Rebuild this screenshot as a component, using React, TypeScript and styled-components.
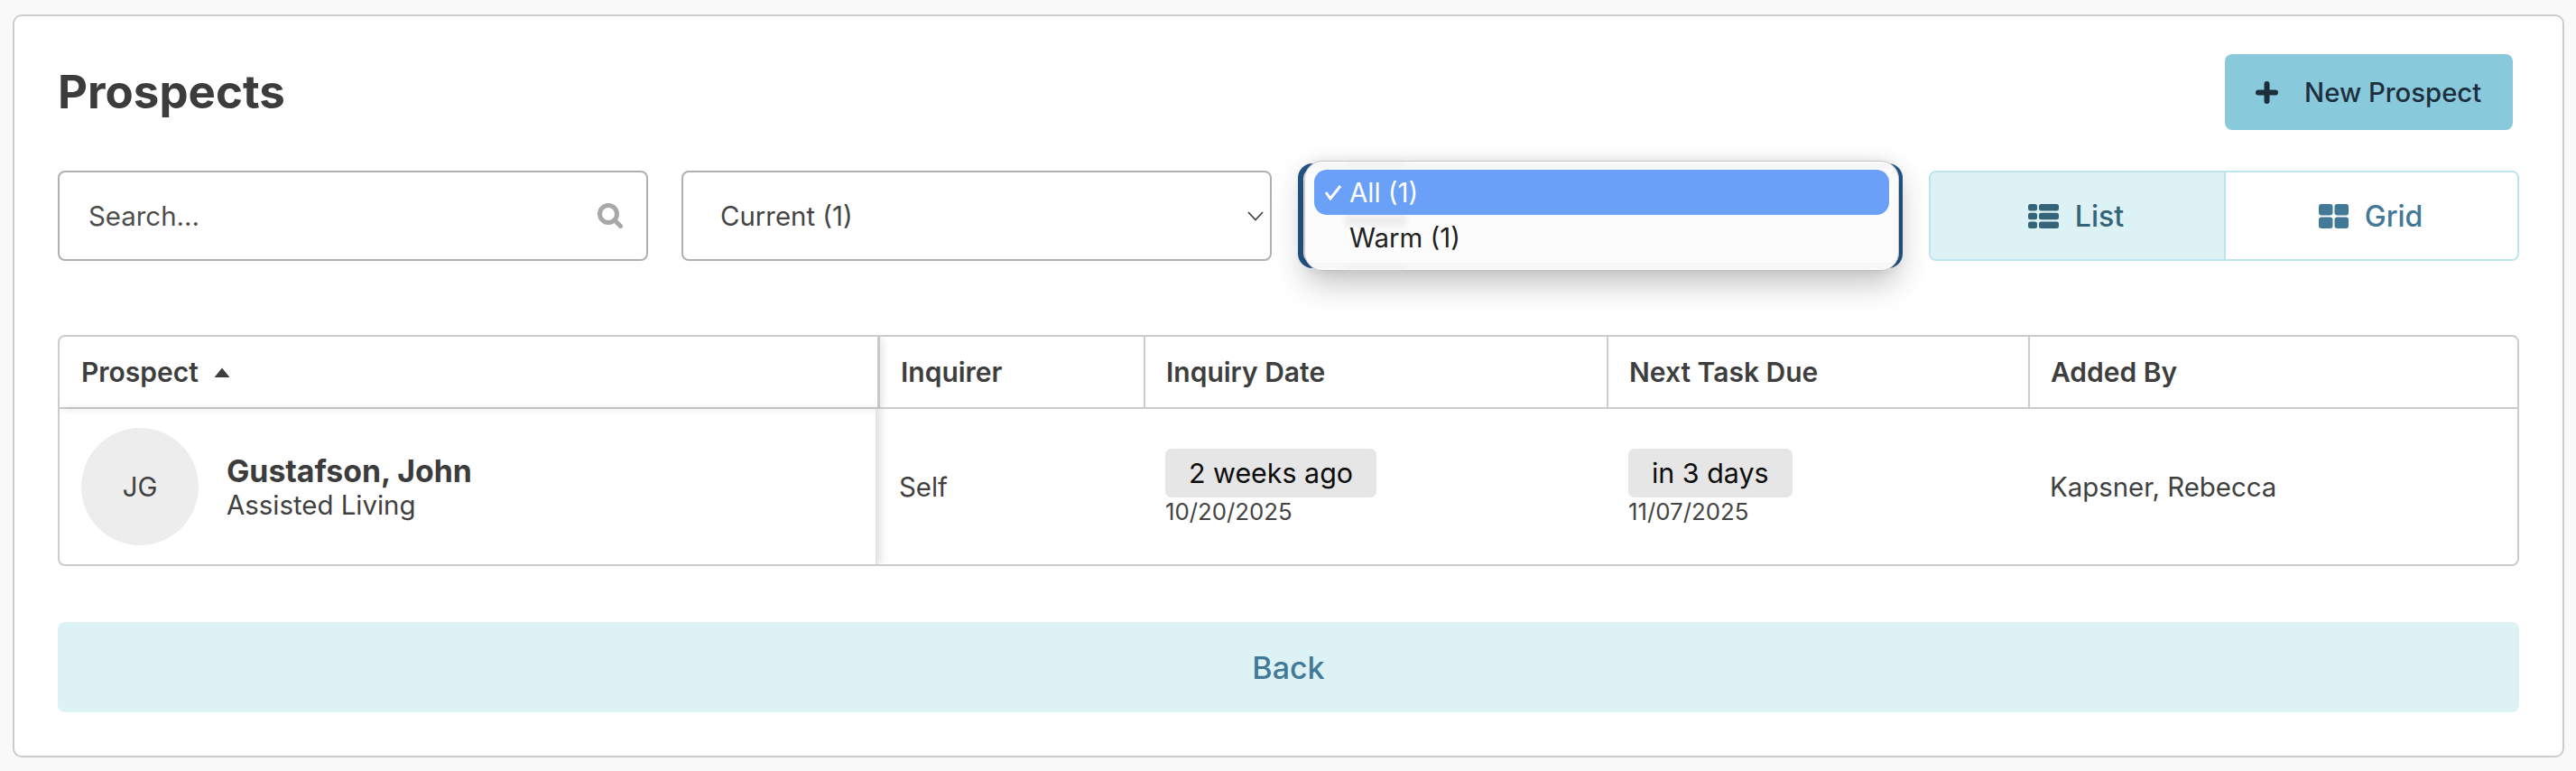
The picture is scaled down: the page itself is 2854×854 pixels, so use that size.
import React from "react";
import styled, { createGlobalStyle } from "styled-components";

const Global = createGlobalStyle`
  html, body { margin: 0; padding: 0; background: #f9f9f9; }
  body { font-family: Inter, "Liberation Sans", sans-serif; color: #3c3c3c; }
  * { box-sizing: border-box; }
`;

const Page = styled.div`
  width: 2854px;
  height: 854px;
  padding: 16px 13px 15px 14px;
`;

const Card = styled.main`
  height: 823px;
  background: #fff;
  border: 2px solid #cccccc;
  border-radius: 10px;
  padding: 42px 48px 0 48px;
  display: flex;
  flex-direction: column;
`;

const Header = styled.div`
  display: flex;
  justify-content: space-between;
  align-items: center;
  height: 84px;
  padding-right: 7px;
  margin-bottom: 45px;
`;

const Title = styled.h1`
  margin: 0;
  font-size: 51px;
  line-height: 58px;
  font-weight: 700;
  color: #3c3c3c;
`;

const NewButton = styled.button`
  width: 319px;
  height: 84px;
  border: 0;
  border-radius: 8px;
  background: #89c9dc;
  color: #1d2f3c;
  font: 500 29.3px Inter, sans-serif;
  display: flex;
  align-items: center;
  padding: 0 0 0 34px;
  gap: 29px;
`;

const Filters = styled.div`
  display: grid;
  grid-template-columns: repeat(4, 1fr);
  gap: 37px;
  height: 100px;
  margin-bottom: 82px;
`;

const Field = styled.div`
  position: relative;
  height: 100px;
  border: 2px solid #b0b0b0;
  border-radius: 8px;
  display: flex;
  align-items: center;
  justify-content: space-between;
  background: #fff;
  font-size: 29.4px;
  color: #444;
`;

const SearchField = styled(Field)`
  padding: 0 26px 0 32px;
  color: #4d4d4d;
`;

const SelectField = styled(Field)`
  padding: 0 7px 0 41px;
`;

const StageField = styled(Field)`
  outline: 6px solid #24588c;
  outline-offset: 2px;
`;

const Menu = styled.div`
  position: absolute;
  left: -3px;
  top: -13px;
  width: 659px;
  height: 122px;
  background: rgba(252, 252, 252, 0.97);
  border: 1px solid #c4c4c4;
  border-radius: 20px;
  box-shadow: 0 14px 34px rgba(0, 0, 0, 0.24), 0 0 12px rgba(0, 0, 0, 0.08);
  padding: 9px 10px;
  z-index: 2;
`;

const Ghost = styled.span<{ $top: number; $height: number }>`
  position: absolute;
  left: 44px;
  top: ${(p) => p.$top}px;
  width: 68px;
  height: ${(p) => p.$height}px;
  background: #e2e2e2;
  filter: blur(3px);
  opacity: 0.55;
`;

const Option = styled.div<{ $active?: boolean }>`
  height: 50px;
  border-radius: 14px;
  display: flex;
  align-items: center;
  padding-left: 39px;
  position: relative;
  background: ${(p) => (p.$active ? "#6aa0f8" : "transparent")};
  color: ${(p) => (p.$active ? "#fff" : "#222")};
  font-size: 29.4px;
`;

const Check = styled.svg`
  position: absolute;
  left: 11px;
  top: 16px;
`;

const ViewSwitch = styled.div`
  height: 100px;
  display: grid;
  grid-template-columns: 325px 1fr;
  border: 2px solid #bde3ee;
  border-radius: 8px;
  overflow: hidden;
`;

const ViewTab = styled.div<{ $active?: boolean }>`
  display: flex;
  align-items: center;
  justify-content: center;
  gap: 18px;
  font-size: 32px;
  font-weight: 500;
  background: ${(p) => (p.$active ? "#ddf2f5" : "#fff")};
  color: ${(p) => (p.$active ? "#356479" : "#417996")};
  padding-right: ${(p) => (p.$active ? "3px" : "2px")};
  & + & { border-left: 2px solid #bde3ee; }
`;

const Table = styled.div`
  height: 256px;
  border: 2px solid #cccccc;
  border-radius: 8px;
  display: grid;
  grid-template-columns: 909px 294px 513px 467px 1fr;
  grid-template-rows: 80px 1fr;
  overflow: hidden;
  margin-bottom: 62px;
`;

const HeadCell = styled.div<{ $first?: boolean }>`
  display: flex;
  align-items: center;
  gap: 17px;
  padding-left: 23px;
  font-size: 30px;
  font-weight: 600;
  color: #3e3e3e;
  border-bottom: 2px solid #cccccc;
  border-right: ${(p) => (p.$first ? "3px solid #c8c8c8" : "2px solid #cccccc")};
  ${(p) => p.$first && "box-shadow: 3px 0 8px rgba(0,0,0,0.10); padding-left: 24px;"}
  &:nth-child(5) { border-right: 0; }
`;

const Cell = styled.div`
  display: flex;
  align-items: center;
  padding-left: 22px;
  font-size: 29.4px;
  color: #404040;
`;

const SelfCell = styled(Cell)`
  padding-left: 21px;
`;

const ProspectCell = styled(Cell)`
  margin-right: 3px;
  padding-left: 24px;
  gap: 31px;
  border-right: 2px solid #e2e5e8;
  box-shadow: 4px 0 9px rgba(0, 0, 0, 0.12);
`;

const Avatar = styled.div`
  width: 130px;
  height: 130px;
  border-radius: 50%;
  background: #ededed;
  display: flex;
  align-items: center;
  justify-content: center;
  font-size: 29.4px;
  color: #404040;
`;

const NameBlock = styled.div`
  display: flex;
  flex-direction: column;
  margin-top: 1px;
`;

const Name = styled.div`
  font-size: 33.8px;
  line-height: 40px;
  font-weight: 700;
  color: #3c3c3c;
`;

const Sub = styled.div`
  font-size: 29.4px;
  line-height: 36px;
  color: #404040;
`;

const DateBlock = styled.div`
  display: flex;
  flex-direction: column;
  align-items: flex-start;
  margin-top: 1px;
`;

const Pill = styled.div`
  height: 54px;
  padding: 0 26px;
  display: flex;
  align-items: center;
  background: #e6e6e6;
  border-radius: 7px;
  color: #0c0c0c;
  font-size: 30.4px;
`;

const DateText = styled.div`
  font-size: 25.8px;
  line-height: 32px;
  color: #444;
`;

const BackButton = styled.button`
  height: 100px;
  border: 0;
  border-radius: 8px;
  background: #ddf2f5;
  color: #417996;
  font: 500 34px Inter, sans-serif;
`;

export default function App() {
  return (
    <Page>
      <Global />
      <Card>
        <Header>
          <Title>Prospects</Title>
          <NewButton>
            <svg width="25" height="25" viewBox="0 0 25 25" aria-hidden="true">
              <path d="M12.5 3v19M3 12.5h19" stroke="#1d2f3c" strokeWidth="6" strokeLinecap="round" />
            </svg>
            New Prospect
          </NewButton>
        </Header>
        <Filters>
          <SearchField>
            Search...
            <svg width="28" height="28" viewBox="0 0 28 28" aria-hidden="true">
              <circle cx="12" cy="12" r="9.5" fill="none" stroke="#a8a8a8" strokeWidth="5" />
              <path d="M19 19l6.5 6.5" stroke="#a8a8a8" strokeWidth="5" strokeLinecap="round" />
            </svg>
          </SearchField>
          <SelectField>
            Current (1)
            <svg width="18" height="11" viewBox="0 0 18 11" aria-hidden="true">
              <path d="M1 1l8 8.5L17 1" fill="none" stroke="#444" strokeWidth="1.8" />
            </svg>
          </SelectField>
          <StageField>
            <Menu>
              <Ghost $top={58} $height={14} />
              <Ghost $top={1} $height={3} />
              <Ghost $top={116} $height={3} />
              <Option $active>
                <Check width="20" height="18" viewBox="0 0 20 18" aria-hidden="true">
                  <path d="M2 9l5 7L18 2" fill="none" stroke="#fff" strokeWidth="3" />
                </Check>
                All (1)
              </Option>
              <Option>Warm (1)</Option>
            </Menu>
          </StageField>
          <ViewSwitch>
            <ViewTab $active>
              <svg width="34" height="27" viewBox="0 0 34 27" aria-hidden="true" fill="#356479">
                <rect x="0" y="0" width="10" height="7.5" rx="2.5" />
                <rect x="12" y="0" width="22" height="7.5" rx="2.5" />
                <rect x="0" y="9.7" width="10" height="7.6" rx="2.5" />
                <rect x="12" y="9.7" width="22" height="7.6" rx="2.5" />
                <rect x="0" y="19.5" width="10" height="7.5" rx="2.5" />
                <rect x="12" y="19.5" width="22" height="7.5" rx="2.5" />
              </svg>
              List
            </ViewTab>
            <ViewTab>
              <svg width="33" height="27" viewBox="0 0 33 27" aria-hidden="true" fill="#417996">
                <rect x="0" y="0" width="15.5" height="12.5" rx="3" />
                <rect x="17.5" y="0" width="15.5" height="12.5" rx="3" />
                <rect x="0" y="14.5" width="15.5" height="12.5" rx="3" />
                <rect x="17.5" y="14.5" width="15.5" height="12.5" rx="3" />
              </svg>
              Grid
            </ViewTab>
          </ViewSwitch>
        </Filters>
        <Table>
          <HeadCell $first>
            Prospect
            <svg width="18" height="11" viewBox="0 0 18 11" aria-hidden="true">
              <path d="M9 .5l8.5 10.5H.5z" fill="#3e3e3e" />
            </svg>
          </HeadCell>
          <HeadCell>Inquirer</HeadCell>
          <HeadCell>Inquiry Date</HeadCell>
          <HeadCell>Next Task Due</HeadCell>
          <HeadCell>Added By</HeadCell>
          <ProspectCell>
            <Avatar>JG</Avatar>
            <NameBlock>
              <Name>Gustafson, John</Name>
              <Sub>Assisted Living</Sub>
            </NameBlock>
          </ProspectCell>
          <SelfCell>Self</SelfCell>
          <Cell>
            <DateBlock>
              <Pill>2 weeks ago</Pill>
              <DateText>10/20/2025</DateText>
            </DateBlock>
          </Cell>
          <Cell>
            <DateBlock>
              <Pill>in 3 days</Pill>
              <DateText>11/07/2025</DateText>
            </DateBlock>
          </Cell>
          <Cell>Kapsner, Rebecca</Cell>
        </Table>
        <BackButton>Back</BackButton>
      </Card>
    </Page>
  );
}
